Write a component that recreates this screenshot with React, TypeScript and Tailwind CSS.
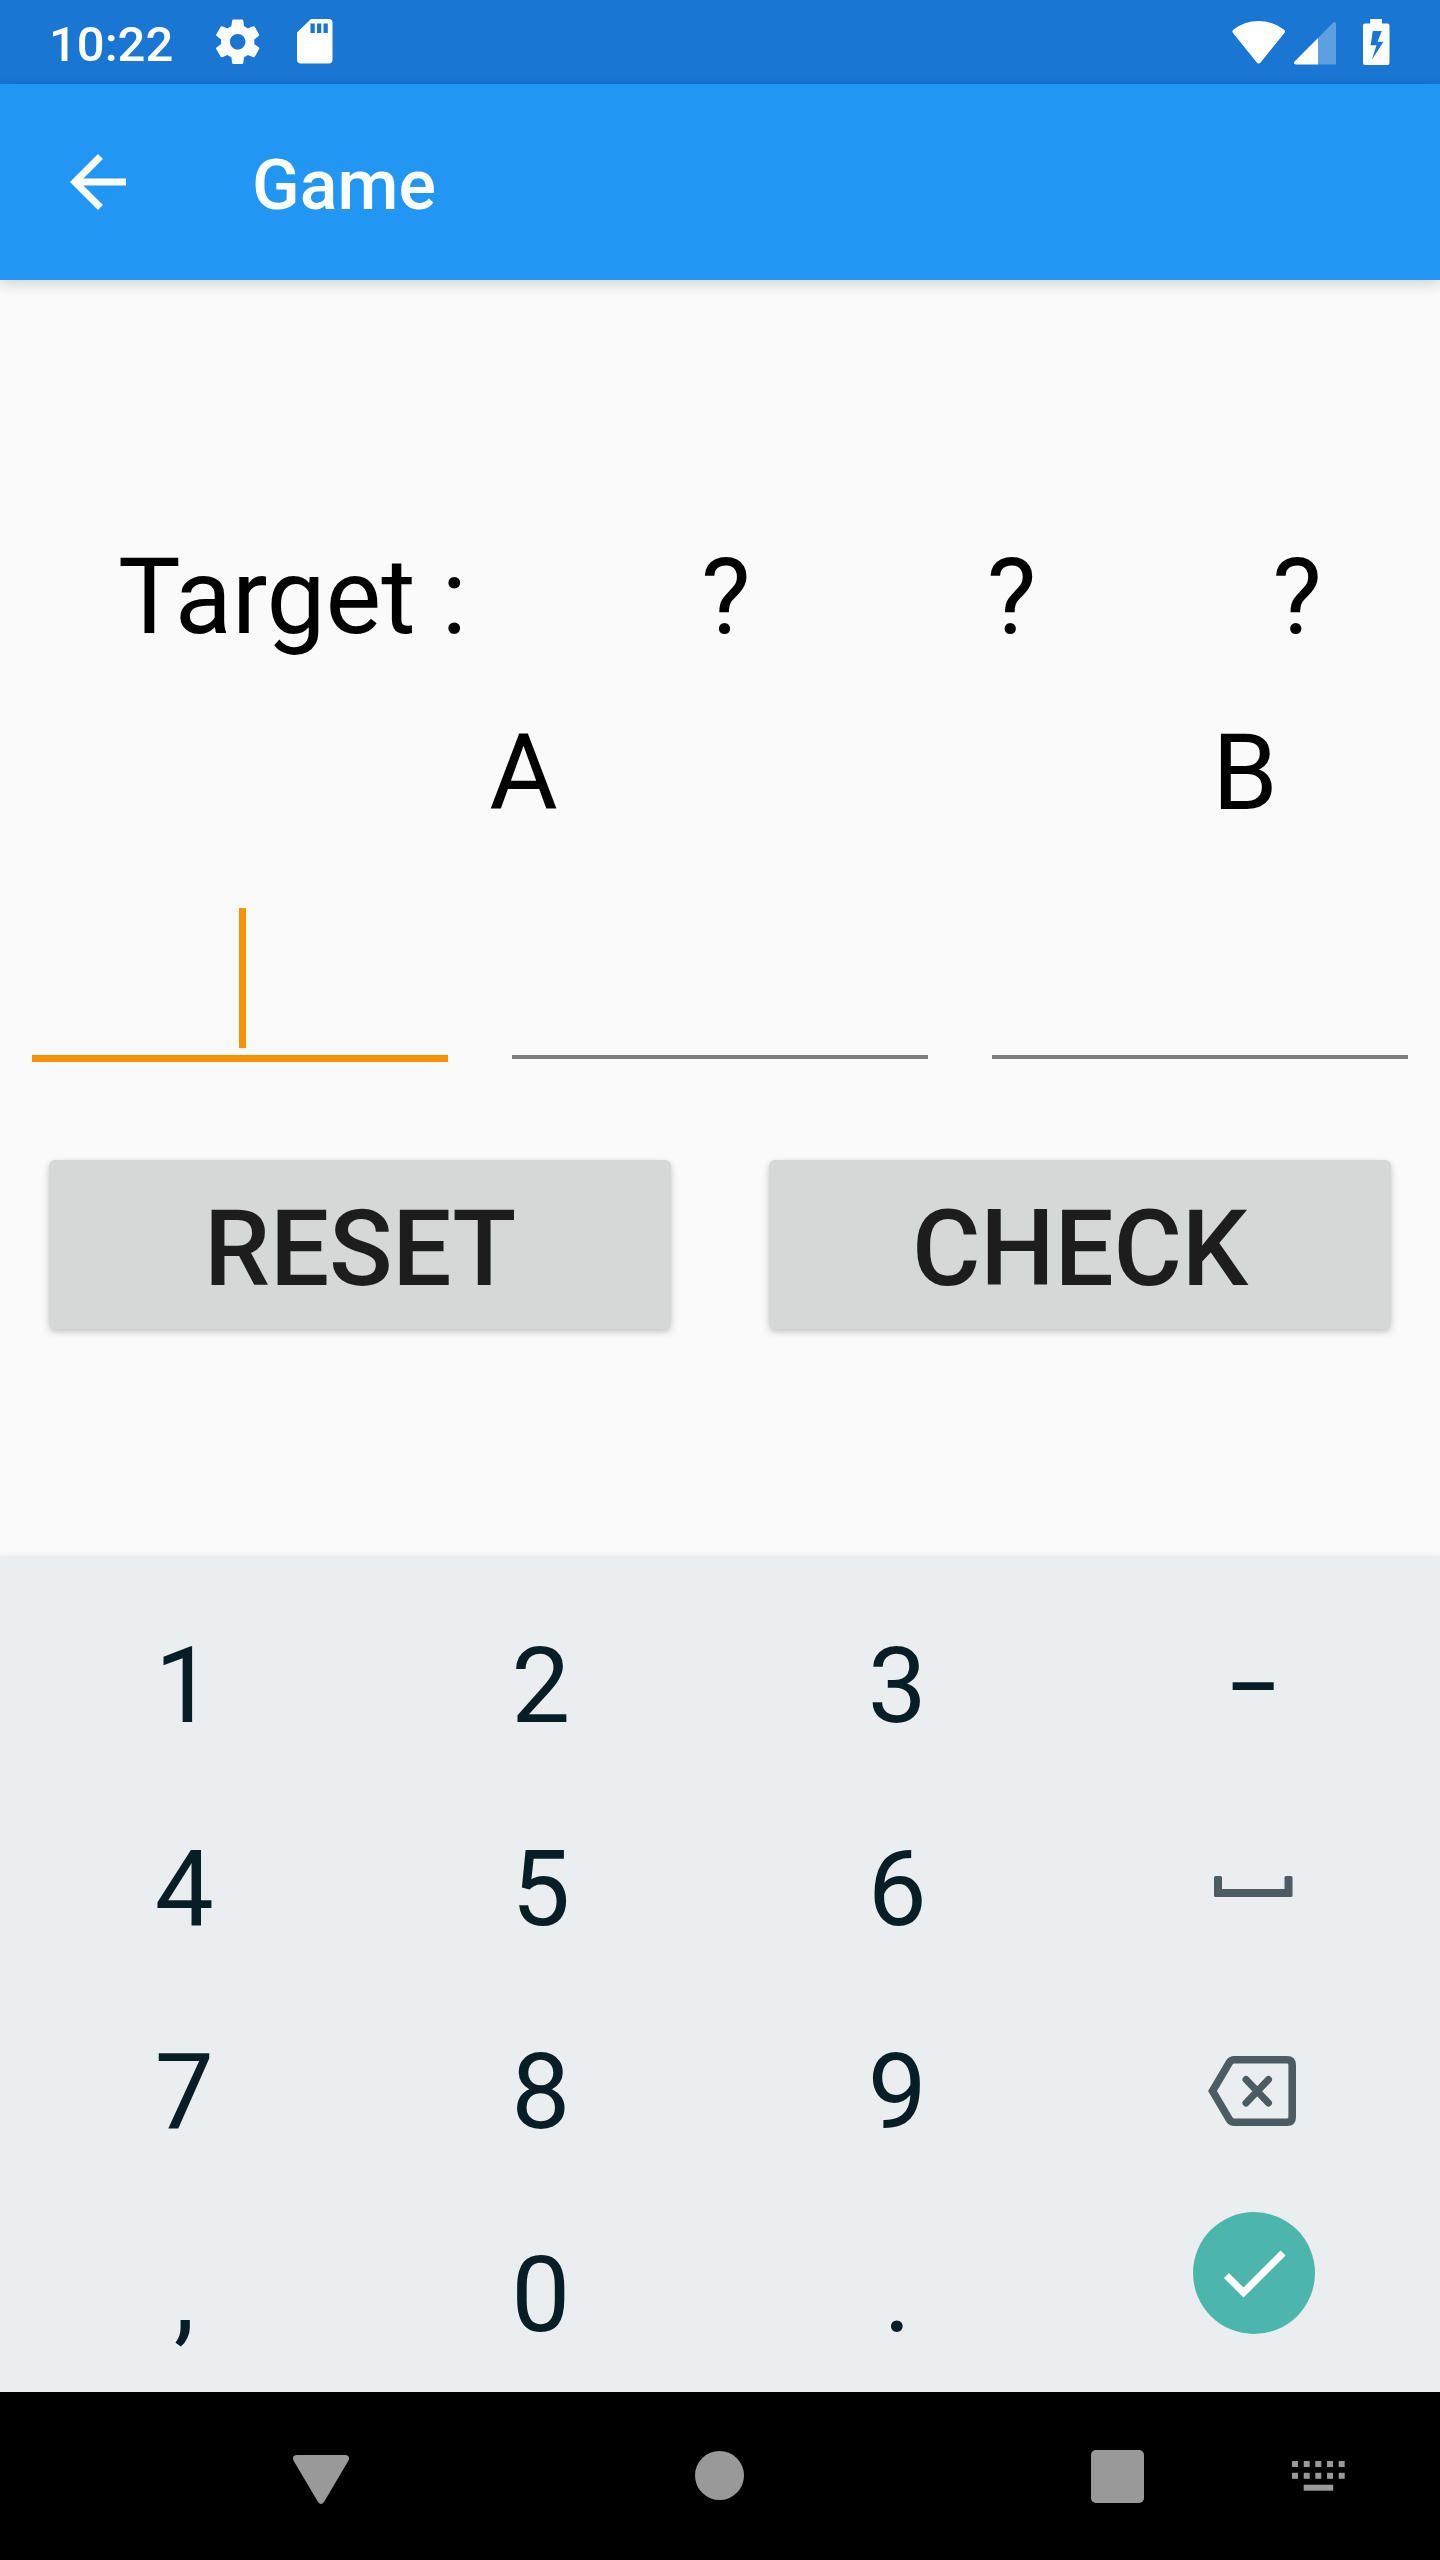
import React from "react";

const GearIcon = () => (
  <svg className="h-[53.4px] w-[53.4px]" viewBox="0 0 24 24" fill="currentColor">
    <path d="M19.43 12.98c.04-.32.07-.64.07-.98s-.03-.66-.07-.98l2.11-1.65c.19-.15.24-.42.12-.64l-2-3.46c-.12-.22-.39-.3-.61-.22l-2.49 1c-.52-.4-1.08-.73-1.69-.98l-.38-2.65C14.46 2.18 14.25 2 14 2h-4c-.25 0-.46.18-.49.42l-.38 2.65c-.61.25-1.17.59-1.69.98l-2.49-1c-.23-.09-.49 0-.61.22l-2 3.46c-.13.22-.07.49.12.64l2.11 1.65c-.04.32-.07.65-.07.98s.03.66.07.98l-2.11 1.65c-.19.15-.24.42-.12.64l2 3.46c.12.22.39.3.61.22l2.49-1c.52.4 1.08.73 1.69.98l.38 2.65c.03.24.24.42.49.42h4c.25 0 .46-.18.49-.42l.38-2.65c.61-.25 1.17-.59 1.69-.98l2.49 1c.23.09.49 0 .61-.22l2-3.46c.12-.22.07-.49-.12-.64l-2.11-1.65zM12 15.5c-1.93 0-3.5-1.57-3.5-3.5s1.57-3.5 3.5-3.5 3.5 1.57 3.5 3.5-1.57 3.5-3.5 3.5z" />
  </svg>
);

const SdCardIcon = () => (
  <svg className="h-[45px] w-[36px]" viewBox="0 0 36 45" fill="currentColor">
    <path
      fillRule="evenodd"
      d="M14 0H31.500a4 4 0 0 1 4 4V40.500a4 4 0 0 1-4 4H4a4 4 0 0 1-4-4V13.500zM13.500 4.500V14H17.800V4.500zM20 4.500V14H24.300V4.500zM26.500 4.500V14H30.800V4.500z"
    />
  </svg>
);

const WifiIcon = () => (
  <svg className="h-[43px] w-[54px]" viewBox="0 0 54 43" fill="currentColor">
    <path d="M1.200 12.200Q-.6 10 1.600 8.400Q13 0 26.700 0T51.800 8.400Q54 10 52.200 12.200L28.800 41.200Q26.700 43.600 24.600 41.200Z" />
  </svg>
);

const SignalIcon = () => (
  <svg className="h-[43px] w-[42px]" viewBox="0 0 42 43" fill="currentColor">
    <path opacity=".3" d="M38.500 1.200Q42-1.500 42 2.500V42.500H24V16z" />
    <path d="M24 16V42.500H2Q-1.500 42 .8 39.200z" />
  </svg>
);

const BatteryIcon = () => (
  <svg className="h-[46px] w-[27px]" viewBox="0 0 27 46" fill="currentColor">
    <path
      fillRule="evenodd"
      d="M7.200 0H19V4.500H24.500a2 2 0 0 1 2 2V44a2 2 0 0 1-2 2H2a2 2 0 0 1-2-2V6.500a2 2 0 0 1 2-2H7.200zM9.800 12L7.600 26.300H13.500L8.700 41L20.500 22.800H14.500L18.800 12z"
    />
  </svg>
);

const BackArrowIcon = () => (
  <svg className="h-[84px] w-[84px]" viewBox="0 0 24 24" fill="currentColor">
    <path d="M20 11H7.830l5.590-5.590L12 4l-8 8 8 8 1.410-1.410L7.830 13H20v-2z" />
  </svg>
);

const SpaceIcon = () => (
  <svg className="h-[22px] w-[79px]" viewBox="0 0 79 22" fill="#4d5c63">
    <path d="M1.500 0H6.500Q8 0 8 1.500V13H70.500V1.500Q70.500 0 72 0H77Q78.500 0 78.500 1.500V19.500Q78.500 21 77 21H1.500Q0 21 0 19.500V1.500Q0 0 1.500 0z" />
  </svg>
);

const BackspaceIcon = () => (
  <svg className="h-[70px] w-[88px]" viewBox="0 0 88 70" fill="none" stroke="#4d5c63">
    <path
      strokeWidth="7.600"
      d="M26 3.800H79Q84.200 3.800 84.200 9V61Q84.200 66.200 79 66.200H26Q23.500 66.200 21.500 63.800L4.500 35L21.500 6.200Q23.500 3.800 26 3.800z"
    />
    <path strokeWidth="7" strokeLinecap="round" d="M38 23.500L60.500 47M60.500 23.500L38 47" />
  </svg>
);

const CheckIcon = () => (
  <svg className="h-[84px] w-[84px]" viewBox="0 0 24 24" fill="#fff">
    <path d="M9 16.170L4.830 12l-1.420 1.410L9 19 21 7l-1.410-1.410z" />
  </svg>
);

const keyRows = [
  ["1", "2", "3", "–"],
  ["4", "5", "6", "space"],
  ["7", "8", "9", "backspace"],
  [",", "0", ".", "done"],
];

const KeyContent = ({ value }: { value: string }) => {
  if (value === "space") {
    return (
      <div className="mb-1.5">
        <SpaceIcon />
      </div>
    );
  }
  if (value === "backspace") {
    return (
      <div className="mb-[3px] mr-[3px]">
        <BackspaceIcon />
      </div>
    );
  }
  if (value === "done") {
    return (
      <div className="mb-[46px] flex h-[122px] w-[122px] items-center justify-center rounded-full bg-[#4db6ac]">
        <CheckIcon />
      </div>
    );
  }
  if (value === "–") {
    return <span className="scale-x-[0.8] pt-[3px]">{value}</span>;
  }
  return <span>{value}</span>;
};

const StatusBar = () => (
  <div className="flex h-[84px] items-center bg-[#1976d2] pl-[49px] pr-[50px] text-white">
    <span className="w-[160px] pt-[4px] text-[49px] font-medium leading-none">10:22</span>
    <div className="flex items-center pl-[1.5px]">
      <GearIcon />
      <div className="ml-[33px]">
        <SdCardIcon />
      </div>
    </div>
    <div className="ml-auto flex items-center">
      <WifiIcon />
      <div className="ml-[8px] mt-[2px]">
        <SignalIcon />
      </div>
      <div className="ml-[27px]">
        <BatteryIcon />
      </div>
    </div>
  </div>
);

const AppBar = () => (
  <div className="relative flex h-[196px] items-center bg-[#2196f3] pl-[56px] text-white shadow-[0_4px_14px_rgba(0,0,0,0.16)]">
    <BackArrowIcon />
    <h1 className="ml-[112px] pt-[6px] text-[70px] font-medium leading-none">Game</h1>
  </div>
);

const Keyboard = () => (
  <div className="h-[836px] bg-[#ebeef1] pl-[6px] pr-[8px] pt-[29px] text-[105px] leading-none text-[#071e26] shadow-[0_-1px_6px_rgba(0,0,0,0.05)]">
    {keyRows.map((row, index) => (
      <div key={index} className="grid h-[203px] grid-cols-4">
        {row.map((value) => (
          <div key={value} className="flex items-center justify-center">
            <KeyContent value={value} />
          </div>
        ))}
      </div>
    ))}
  </div>
);

const NavBar = () => (
  <div className="flex h-[168px] items-center bg-black text-[#999999]">
    <svg className="ml-[293px] mt-[7px] h-[49px] w-[56px]" viewBox="0 0 56 49" fill="currentColor">
      <path d="M4 0H52Q57.500 .5 55.500 5.500L31 47Q28 51 25 47L.5 5.500Q-1.500 .5 4 0z" />
    </svg>
    <div className="mb-[1px] ml-[346px] h-[49px] w-[49px] rounded-full bg-[#999999]" />
    <div className="ml-[347px] h-[53px] w-[53px] rounded-[5px] bg-[#999999]" />
    <svg className="ml-[148px] h-[30px] w-[53px]" viewBox="0 0 53 30" fill="currentColor">
      {[0, 11.7, 23.3, 35, 46.7].map((x) => (
        <g key={x}>
          <rect x={x} y="0" width="6" height="6" />
          <rect x={x} y="11.800" width="6" height="6" />
        </g>
      ))}
      <rect x="11.700" y="23.700" width="29.500" height="6" />
    </svg>
  </div>
);

const App = () => {
  return (
    <div className="flex h-[2560px] w-[1440px] flex-col overflow-hidden bg-[#fafafa] font-[Roboto,sans-serif]">
      <StatusBar />
      <AppBar />

      <main className="flex-1 pt-[229px] text-[105px] leading-none text-black">
        <div className="grid h-[176px] grid-cols-[583px_repeat(3,1fr)] items-center text-center">
          <span className="pl-[2px]">Target :</span>
          <span>?</span>
          <span>?</span>
          <span>?</span>
        </div>
        <div className="grid h-[176px] grid-cols-[327px_393px_327px_393px] items-center text-center">
          <span />
          <span>A</span>
          <span />
          <span className="pl-[3px]">B</span>
        </div>

        <div className="grid h-[201px] grid-cols-3">
          <div className="mx-8 flex flex-col items-center border-b-[7px] border-[#f99306] pt-[47px]">
            <div className="ml-[5px] h-[140px] w-[7px] bg-[#f99306]" />
          </div>
          <div className="mx-8 mb-[3px] border-b-[4px] border-[#7d7d7d]" />
          <div className="mx-8 mb-[3px] border-b-[4px] border-[#7d7d7d]" />
        </div>

        <div className="mt-[98px] grid grid-cols-2">
          {["RESET", "CHECK"].map((label) => (
            <button
              key={label}
              className="mx-[49px] flex h-[169px] items-center justify-center rounded-[6px] bg-[#d6d7d7] pt-[10px] font-medium tracking-[-0.3px] text-[#1c1d1c] shadow-[0_3px_7px_rgba(0,0,0,0.22)]"
            >
              {label}
            </button>
          ))}
        </div>
      </main>

      <Keyboard />
      <NavBar />
    </div>
  );
};

export default App;
